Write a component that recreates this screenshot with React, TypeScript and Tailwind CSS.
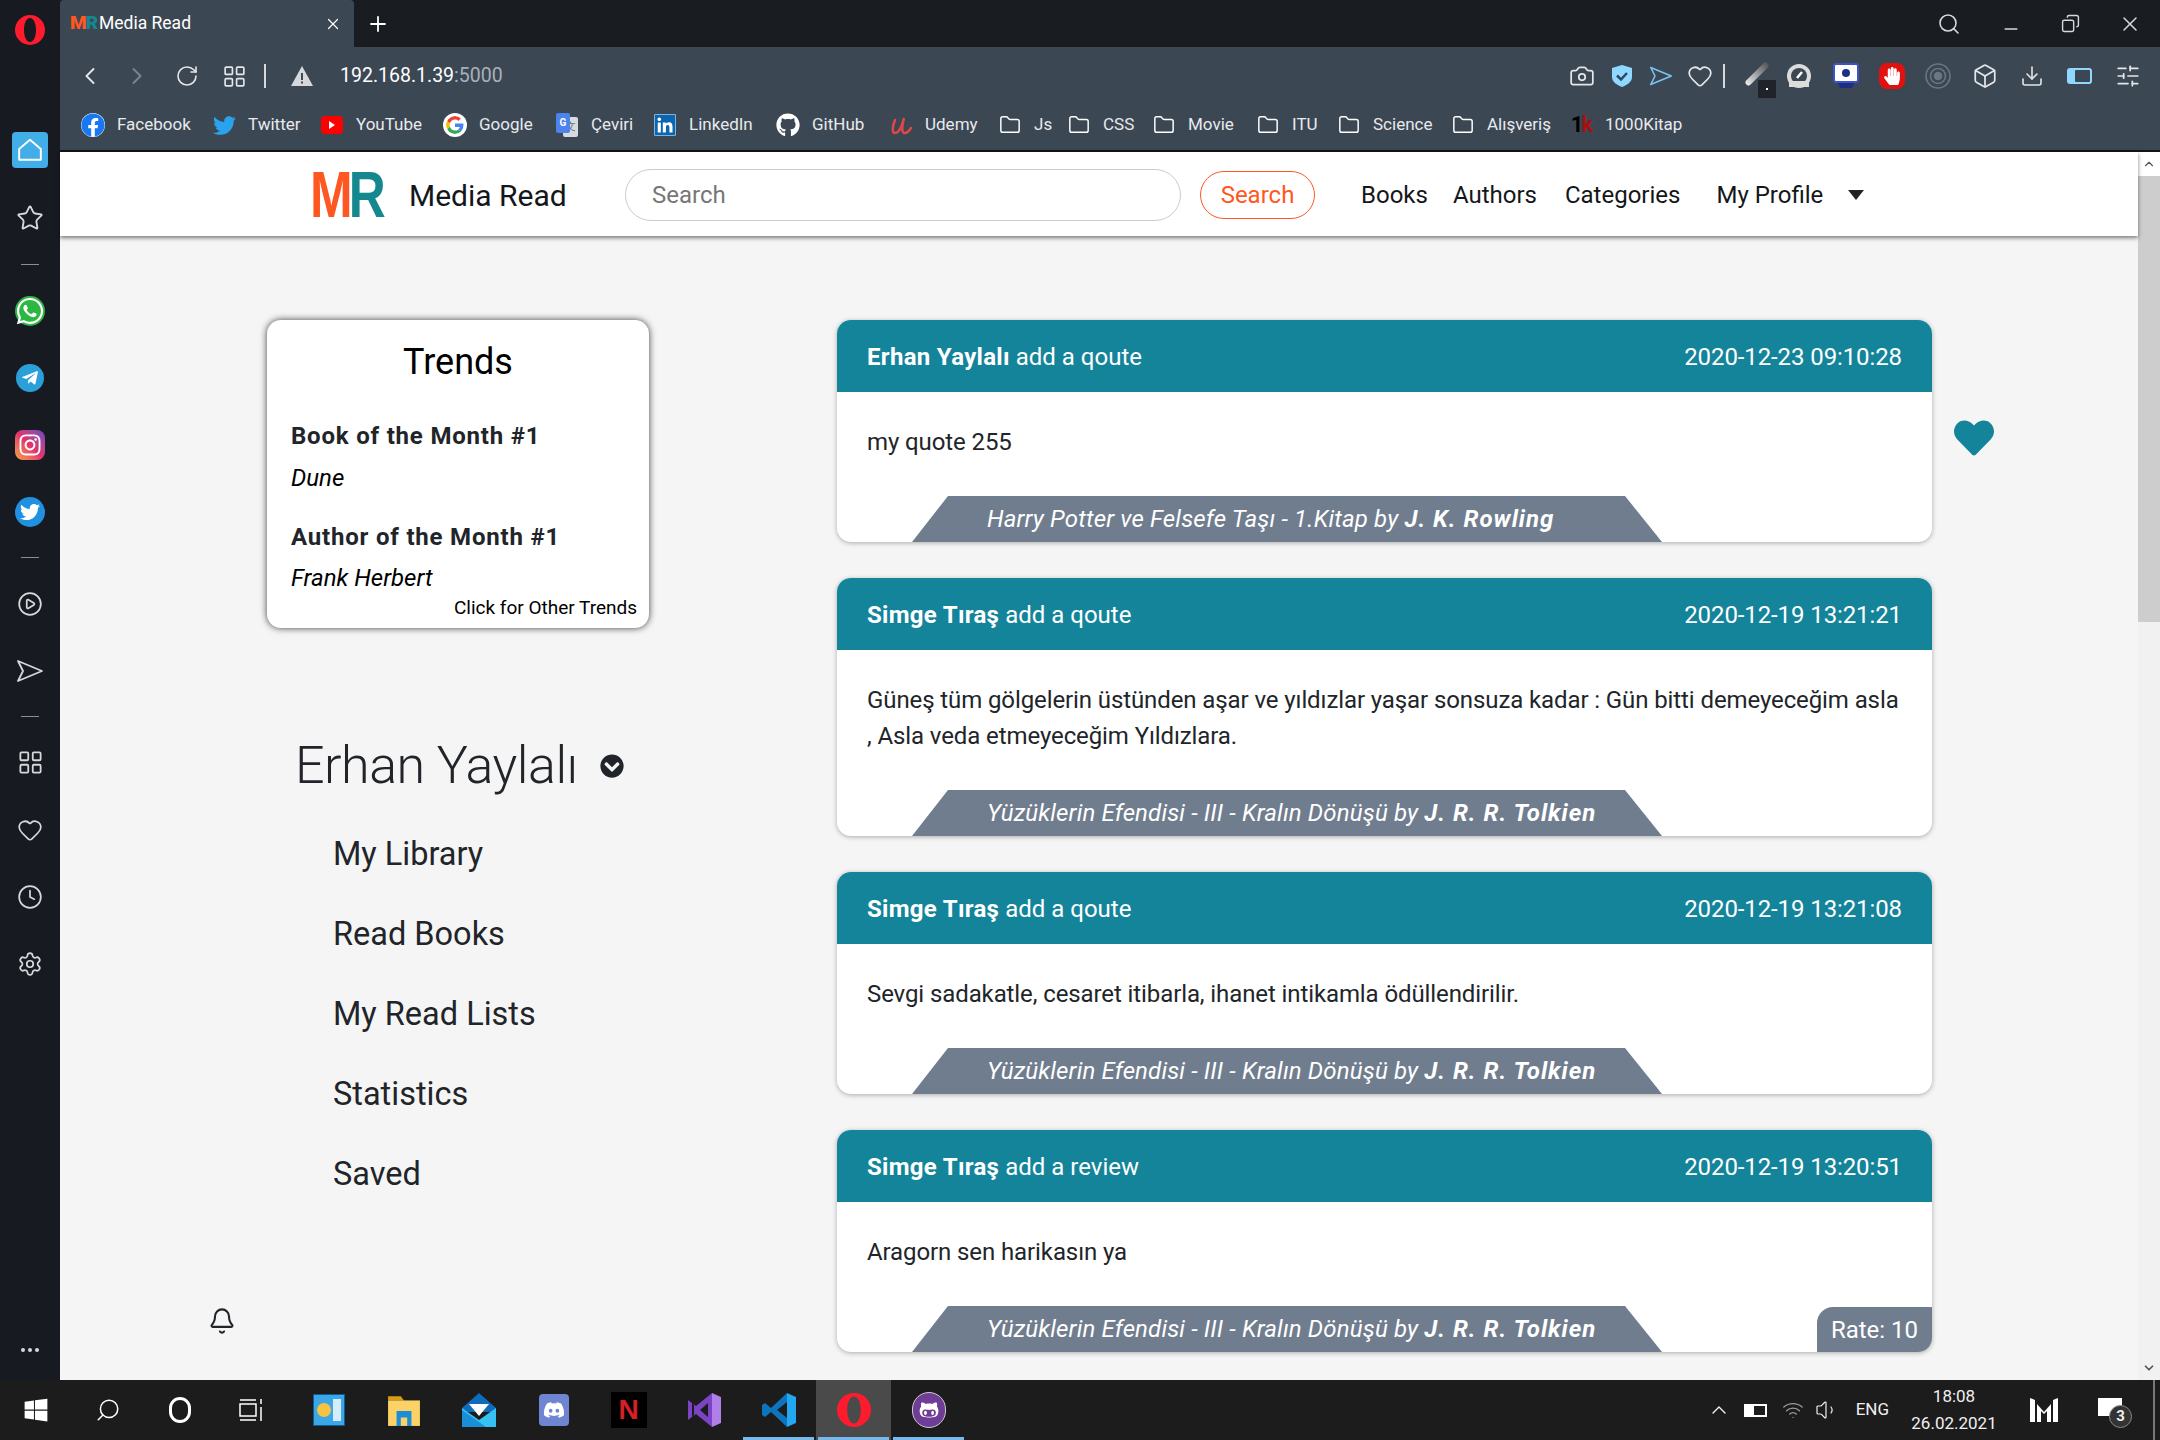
import React from "react";
import {
  Search, Minus, Copy, X, Plus, ChevronLeft, ChevronRight, RotateCw, LayoutGrid, Folder, Camera,
  Heart, Box, Download, SlidersHorizontal, Star, CirclePlay, Clock, Settings, Bell, ChevronUp,
  ChevronDown, Volume1, Wifi, MoreHorizontal,
} from "lucide-react";
import { FaFacebook, FaTwitter, FaLinkedin, FaGithub, FaWhatsapp, FaTelegramPlane, FaInstagram, FaWindows, FaDiscord, FaHeart, FaChevronCircleDown, FaGithubAlt, FaHandPaper } from "react-icons/fa";

const SendOutline = ({ className = "" }: { className?: string }) => (
  <svg viewBox="0 0 28 24" fill="none" stroke="currentColor" strokeWidth="1.8" strokeLinejoin="round" className={className}>
    <path d="M2 2 L26 12 L2 22 L7 12 Z" />
  </svg>
);

const OperaLogo = ({ className = "" }: { className?: string }) => (
  <svg viewBox="0 0 30 30" className={className}>
    <path fillRule="evenodd" fill="#ff1b2d" d="M15 0a15 15 0 1 0 0 30a15 15 0 1 0 0-30zM15 3c3.6 0 6 5.4 6 12s-2.4 12-6 12s-6-5.4-6-12s2.4-12 6-12z" />
  </svg>
);

const GoogleIcon = () => (
  <svg viewBox="0 0 48 48" className="w-[24px] h-[24px] bg-white rounded-full p-[3px]">
    <path fill="#EA4335" d="M24 9.5c3.5 0 6.700 1.300 9.100 3.500l6.800-6.800C35.800 2.400 30.300 0 24 0 14.600 0 6.500 5.400 2.600 13.200l7.900 6.200C12.400 13.700 17.700 9.500 24 9.500z" />
    <path fill="#4285F4" d="M46.500 24.500c0-1.600-.1-3.100-.4-4.500H24v9h12.700c-.5 2.900-2.200 5.400-4.700 7l7.300 5.700c4.300-4 7.200-9.900 7.200-17.200z" />
    <path fill="#FBBC05" d="M10.500 28.600c-.5-1.400-.8-3-.8-4.600s.3-3.200.8-4.600l-7.900-6.200C.9 16.500 0 20.100 0 24s.9 7.500 2.600 10.800l7.900-6.200z" />
    <path fill="#34A853" d="M24 48c6.500 0 11.900-2.100 15.900-5.800L32 36.500c-2.200 1.500-5 2.300-8 2.300-6.300 0-11.600-4.200-13.500-9.900l-7.900 6.200C6.500 42.600 14.600 48 24 48z" />
  </svg>
);

const TranslateIcon = () => (
  <span className="relative w-[22px] h-[24px] block">
    <span className="absolute right-0 bottom-0 w-[15px] h-[20px] bg-[#d7dbe0] rounded-[2px] text-[#67707a] text-[11px] leading-[20px] text-center">文</span>
    <span className="absolute left-0 top-0 w-[14px] h-[20px] bg-[#4c83ec] rounded-[2px] text-white text-[10px] font-bold leading-[20px] text-center">G</span>
  </span>
);

const bookmarks: { label: string; icon: React.ReactNode; width: string }[] = [
  { label: "Facebook", width: "w-[131px]", icon: <span className="w-[24px] h-[24px] rounded-full bg-white flex items-center justify-center"><FaFacebook className="w-[24px] h-[24px] text-[#1877f2]" /></span> },
  { label: "Twitter", width: "w-[108px]", icon: <FaTwitter className="w-[23px] h-[23px] text-[#2aa3ef]" /> },
  { label: "YouTube", width: "w-[123px]", icon: <span className="w-[22px] h-[18px] rounded-[4px] bg-[#f00] flex items-center justify-center"><span className="w-0 h-0 border-y-[4px] border-y-transparent border-l-[6px] border-l-white" /></span> },
  { label: "Google", width: "w-[112px]", icon: <GoogleIcon /> },
  { label: "Çeviri", width: "w-[98px]", icon: <TranslateIcon /> },
  { label: "LinkedIn", width: "w-[123px]", icon: <span className="w-[22px] h-[22px] bg-white rounded-[2px] flex items-center justify-center"><FaLinkedin className="w-[24px] h-[24px] text-[#0a66b0]" /></span> },
  { label: "GitHub", width: "w-[113px]", icon: <span className="w-[24px] h-[24px] rounded-full bg-[#3c4754] flex items-center justify-center"><FaGithub className="w-[24px] h-[24px] text-white" /></span> },
  { label: "Udemy", width: "w-[109px]", icon: <svg viewBox="0 0 24 24" fill="none" stroke="#e04848" strokeWidth="2.500" strokeLinecap="round" className="w-[24px] h-[24px]"><path d="M6 7 C3 14 3 20 6 20 C10 20 13 13 15 5 C13 12 12 20 16 20 C18 20 20 18 22 15" /></svg> },
  { label: "Js", width: "w-[69px]", icon: <Folder className="w-[22px] h-[22px] text-white" strokeWidth={1.6} /> },
  { label: "CSS", width: "w-[85px]", icon: <Folder className="w-[22px] h-[22px] text-white" strokeWidth={1.6} /> },
  { label: "Movie", width: "w-[104px]", icon: <Folder className="w-[22px] h-[22px] text-white" strokeWidth={1.6} /> },
  { label: "ITU", width: "w-[81px]", icon: <Folder className="w-[22px] h-[22px] text-white" strokeWidth={1.6} /> },
  { label: "Science", width: "w-[114px]", icon: <Folder className="w-[22px] h-[22px] text-white" strokeWidth={1.6} /> },
  { label: "Alışveriş", width: "w-[118px]", icon: <Folder className="w-[22px] h-[22px] text-white" strokeWidth={1.6} /> },
  { label: "1000Kitap", width: "w-[116px]", icon: <span className="text-[22px] leading-[24px] font-bold tracking-[-2px]"><span className="text-black">1</span><span className="text-[#a80f0f]">k</span></span> },
];

const Divider = () => (
  <div className="h-[25px] flex items-center justify-center">
    <div className="w-[18px] h-[1px] bg-[#8a8f96]" />
  </div>
);

const SideItem = ({ children }: { children: React.ReactNode }) => (
  <div className="h-[67px] flex items-center justify-center text-[#d6d8db]">{children}</div>
);

const Sidebar = () => (
  <div className="w-[60px] shrink-0 bg-[#171b21] flex flex-col">
    <div className="h-[116px] pt-[15px] flex justify-center"><OperaLogo className="w-[30px] h-[30px]" /></div>
    <div className="h-[68px] flex items-center justify-center">
      <div className="w-[36px] h-[36px] rounded-[4px] bg-[#41aee8] flex items-center justify-center">
        <svg viewBox="0 0 24 24" fill="none" stroke="#fff" strokeWidth="1.8" strokeLinejoin="round" className="w-[26px] h-[26px]"><path d="M12 2.500 L22 11 V21 H2 V11 Z" /></svg>
      </div>
    </div>
    <div className="h-[68px] flex items-center justify-center text-[#d6d8db]"><Star className="w-[28px] h-[28px]" strokeWidth={1.6} /></div>
    <Divider />
    <SideItem>
      <span className="w-[30px] h-[30px] rounded-full bg-[#2cb742] flex items-center justify-center"><FaWhatsapp className="w-[30px] h-[30px] text-white" /></span>
    </SideItem>
    <SideItem>
      <span className="w-[28px] h-[28px] rounded-full bg-[#2a9fd8] flex items-center justify-center"><FaTelegramPlane className="w-[18px] h-[18px] text-white" /></span>
    </SideItem>
    <SideItem>
      <span className="w-[30px] h-[30px] rounded-[8px] bg-gradient-to-tr from-[#f9a13a] via-[#e1306c] to-[#6a3ec9] flex items-center justify-center"><FaInstagram className="w-[24px] h-[24px] text-white" /></span>
    </SideItem>
    <SideItem>
      <span className="w-[30px] h-[30px] rounded-full bg-[#1f91e0] flex items-center justify-center"><FaTwitter className="w-[20px] h-[20px] text-white" /></span>
    </SideItem>
    <Divider />
    <SideItem><CirclePlay className="w-[26px] h-[26px]" strokeWidth={1.6} /></SideItem>
    <SideItem><SendOutline className="w-[28px] h-[26px]" /></SideItem>
    <Divider />
    <SideItem><LayoutGrid className="w-[27px] h-[27px]" strokeWidth={1.6} /></SideItem>
    <SideItem><Heart className="w-[26px] h-[26px]" strokeWidth={1.6} /></SideItem>
    <SideItem><Clock className="w-[26px] h-[26px]" strokeWidth={1.6} /></SideItem>
    <SideItem><Settings className="w-[26px] h-[26px]" strokeWidth={1.6} /></SideItem>
    <div className="mt-auto h-[60px] flex items-center justify-center text-[#d6d8db]"><MoreHorizontal className="w-[24px] h-[24px]" /></div>
  </div>
);

const TabStrip = () => (
  <div className="h-[47px] bg-[#191c20] flex items-stretch shrink-0">
    <div className="w-[294px] bg-[#3c4754] rounded-tl-[4px] rounded-tr-[4px] flex items-center pl-[10px] pr-[12px] text-white">
      <span className="font-black text-[19px] tracking-[-1px] w-[29px]"><span className="text-[#ff5722]">M</span><span className="text-[#14878f]">R</span></span>
      <span className="text-[17.500px]">Media Read</span>
      <X className="ml-auto w-[18px] h-[18px]" strokeWidth={1.6} />
    </div>
    <div className="w-[48px] flex items-center justify-center text-white"><Plus className="w-[24px] h-[24px]" strokeWidth={1.8} /></div>
    <div className="ml-auto flex items-center text-[#d6d8db]">
      <div className="w-[60px] pr-[6px] flex justify-center"><Search className="w-[24px] h-[24px]" strokeWidth={1.6} /></div>
      <div className="w-[58px] flex justify-center pt-[10px]"><Minus className="w-[20px] h-[20px]" strokeWidth={1.8} /></div>
      <div className="w-[60px] flex justify-center"><Copy className="w-[19px] h-[19px] -scale-x-100" strokeWidth={1.8} /></div>
      <div className="w-[60px] flex justify-center"><X className="w-[24px] h-[24px]" strokeWidth={1.5} /></div>
    </div>
  </div>
);

const Toolbar = () => (
  <div className="h-[58px] bg-[#3c4754] flex items-center shrink-0 text-[#e4e6e8] pl-[16px]">
    <ChevronLeft className="w-[28px] h-[28px]" strokeWidth={1.6} />
    <ChevronRight className="ml-[19px] w-[28px] h-[28px] text-[#7c8591]" strokeWidth={1.6} />
    <RotateCw className="ml-[24px] w-[24px] h-[24px]" strokeWidth={1.6} />
    <LayoutGrid className="ml-[23px] w-[25px] h-[25px]" strokeWidth={1.6} />
    <div className="ml-[17px] w-[2px] h-[24px] bg-[#d6d8db]" />
    <svg viewBox="0 0 24 24" className="ml-[24px] w-[24px] h-[24px]"><path fill="#d6d8db" d="M12 2 L23 22 H1 Z" /><path fill="#3c4754" d="M11 9h2v7h-2zM11 17.500h2v2h-2z" /></svg>
    <div className="ml-[26px] text-[19.500px]"><span className="text-white">192.168.1.39</span><span className="text-[#aab0b7]">:5000</span></div>
    <div className="ml-auto flex items-center pr-[19px]">
      <Camera className="w-[26px] h-[26px]" strokeWidth={1.6} />
      <svg viewBox="0 0 24 24" className="ml-[15px] w-[24px] h-[28px]"><path fill="#8fd8ff" d="M12 1 L22 4 V13 C22 18 17 21 12 23 C7 21 2 18 2 13 V4 Z" /><path fill="none" stroke="#2d4860" strokeWidth="2.500" d="M7 11.500 L11 15.500 L17 9" /></svg>
      <SendOutline className="ml-[15px] w-[24px] h-[24px] text-[#7cc4ee]" />
      <Heart className="ml-[14px] w-[26px] h-[26px]" strokeWidth={1.6} />
      <div className="ml-[10px] w-[2px] h-[24px] bg-[#d6d8db]" />
      <div className="ml-[14px] w-[34px] h-[34px] relative">
        <span className="absolute left-[3px] top-[12px] w-[30px] h-[6px] bg-gradient-to-r from-[#eee] to-[#555] rounded-full -rotate-45" />
        <span className="absolute right-[-3px] bottom-[-5px] w-[18px] h-[18px] bg-[#20242a] flex items-center justify-center"><span className="w-[2px] h-[2px] bg-white" /></span>
      </div>
      <svg viewBox="0 0 26 26" className="ml-[13px] w-[26px] h-[26px]"><circle cx="13" cy="13" r="12" fill="#dcdcdc" /><circle cx="13" cy="13" r="8" fill="#3c4754" /><rect x="3" y="18" width="20" height="6" fill="#dcdcdc" /><path stroke="#fff" strokeWidth="2.500" d="M11 15 L16 9" /></svg>
      <svg viewBox="0 0 26 26" className="ml-[21px] w-[26px] h-[26px]"><rect x="1" y="1" width="24" height="18" rx="2" fill="#fff" stroke="#3f51c9" strokeWidth="2" /><circle cx="13" cy="10" r="4" fill="#1c2f80" /><path fill="#1c2f80" d="M5 20h16l-2 5H7z" /></svg>
      <span className="ml-[20px] w-[26px] h-[26px] bg-[#e31010] rounded-[8px] flex items-center justify-center"><FaHandPaper className="w-[16px] h-[18px] text-white" /></span>
      <svg viewBox="0 0 26 26" fill="none" stroke="#6c7682" strokeWidth="1.600" className="ml-[20px] w-[26px] h-[26px]"><circle cx="13" cy="13" r="12" /><circle cx="13" cy="13" r="7.500" /><circle cx="13" cy="13" r="3.500" fill="#6c7682" /></svg>
      <Box className="ml-[21px] w-[26px] h-[26px]" strokeWidth={1.6} />
      <Download className="ml-[22px] w-[24px] h-[24px]" strokeWidth={1.6} />
      <span className="ml-[23px] w-[25px] h-[16px] rounded-[3px] bg-[#8fd8ff] flex justify-end p-[2px]"><span className="w-[15px] h-full bg-[#3c4754] rounded-[1px]" /></span>
      <SlidersHorizontal className="ml-[23px] w-[26px] h-[26px]" strokeWidth={1.6} />
    </div>
  </div>
);

const Bookmarks = () => (
  <div className="h-[47px] pb-[5px] bg-[#3c4754] border-b-2 border-[#111418] flex items-center shrink-0 pl-[21px] text-[#e8eaec] text-[17px]">
    {bookmarks.map(b => (
      <div key={b.label} className={`${b.width} shrink-0 flex items-center`}>
        <span className="w-[24px] h-[24px] flex items-center justify-center">{b.icon}</span>
        <span className="ml-[12px]">{b.label}</span>
      </div>
    ))}
  </div>
);

const Navbar = () => (
  <div className="h-[84px] pt-[2px] bg-white shadow-[0_2px_4px_rgba(0,0,0,0.5)] flex items-center pl-[250px] text-[24px] text-[#14171a] shrink-0 relative z-10">
    <div className="w-[99px] h-[60px] font-black text-[64px] leading-none tracking-[-5px] font-['Liberation_Sans',sans-serif] flex items-center origin-left scale-x-[0.8]">
      <span className="text-[#ff5722]">M</span><span className="text-[#14878f]">R</span>
    </div>
    <span className="text-[30px] w-[216px]">Media Read</span>
    <input readOnly placeholder="Search" className="w-[556px] h-[52px] border border-[#ccc] rounded-[26px] px-[26px] placeholder:text-[#777] text-[24px] outline-none" />
    <button className="ml-[19px] w-[115px] h-[48px] border border-[#ff5722] rounded-[24px] text-[#ff5722]">Search</button>
    <span className="ml-[46px]">Books</span>
    <span className="ml-[25px]">Authors</span>
    <span className="ml-[28px]">Categories</span>
    <span className="ml-[36px]">My Profile</span>
    <span className="ml-[25px] w-0 h-0 border-x-[8px] border-x-transparent border-t-[10px] border-t-[#212529]" />
  </div>
);

const Trends = () => (
  <div className="w-[382px] h-[308px] bg-white rounded-[14px] shadow-[0_0_7px_rgba(0,0,0,0.75)] pl-[24px] pr-[12px] flex flex-col text-black">
    <h2 className="text-[36px] leading-[48px] text-center pt-[18px] h-[83px] -ml-[12px]">Trends</h2>
    <div className="text-[24px] leading-[36px] font-bold tracking-[0.8px] text-[#212529] mt-[15px]">Book of the Month #1</div>
    <div className="text-[24px] leading-[36px] italic mt-[6px]">Dune</div>
    <div className="text-[24px] leading-[36px] font-bold tracking-[0.8px] text-[#212529] mt-[23px]">Author of the Month #1</div>
    <div className="text-[24px] leading-[36px] italic mt-[5px]">Frank Herbert</div>
    <div className="text-[19px] leading-[24px] text-right">Click for Other Trends</div>
  </div>
);

const menu = ["My Library", "Read Books", "My Read Lists", "Statistics", "Saved"];

const UserMenu = () => (
  <div className="mt-[96px] pl-[28px]">
    <div className="flex items-center h-[84px]">
      <span className="text-[52px] tracking-[-0.5px] font-light text-[#212529] whitespace-nowrap">Erhan Yaylalı</span>
      <FaChevronCircleDown className="ml-[22px] w-[24px] h-[24px] text-[#212529]" />
    </div>
    <div className="pl-[38px] mt-[6px] flex flex-col text-[32.500px] text-[#212529]">
      {menu.map(m => (
        <div key={m} className="h-[80px] flex items-center">{m}</div>
      ))}
    </div>
  </div>
);

type Post = {
  user: string;
  action: string;
  date: string;
  body: React.ReactNode;
  book: string;
  author: string;
  rate?: number;
  liked?: boolean;
};

const posts: Post[] = [
  { user: "Erhan Yaylalı", action: "add a qoute", date: "2020-12-23 09:10:28", body: "my quote 255", book: "Harry Potter ve Felsefe Taşı - 1.Kitap", author: "J. K. Rowling", liked: true },
  {
    user: "Simge Tıraş", action: "add a qoute", date: "2020-12-19 13:21:21",
    body: <>Güneş tüm gölgelerin üstünden aşar ve yıldızlar yaşar sonsuza kadar : Gün bitti demeyeceğim asla<br />, Asla veda etmeyeceğim Yıldızlara.</>,
    book: "Yüzüklerin Efendisi - III - Kralın Dönüşü", author: "J. R. R. Tolkien",
  },
  { user: "Simge Tıraş", action: "add a qoute", date: "2020-12-19 13:21:08", body: "Sevgi sadakatle, cesaret itibarla, ihanet intikamla ödüllendirilir.", book: "Yüzüklerin Efendisi - III - Kralın Dönüşü", author: "J. R. R. Tolkien" },
  { user: "Simge Tıraş", action: "add a review", date: "2020-12-19 13:20:51", body: "Aragorn sen harikasın ya", book: "Yüzüklerin Efendisi - III - Kralın Dönüşü", author: "J. R. R. Tolkien", rate: 10 },
];

const PostCard = ({ post }: { post: Post }) => (
  <div className="relative w-[1095px]">
    <div className="relative rounded-[14px] bg-white shadow-[0_1px_5px_rgba(0,0,0,0.3)] overflow-hidden">
      <div className="h-[72px] pt-[2px] bg-[#14849a] text-white text-[24px] flex items-center justify-between px-[30px]">
        <span><b className="font-bold tracking-[0.3px]">{post.user}</b> {post.action}</span>
        <span className="tracking-[-0.1px]">{post.date}</span>
      </div>
      <div className="pt-[32px] pb-[36px] px-[30px] text-[24px] leading-[36px] tracking-[-0.1px] whitespace-nowrap text-[#212529]">{post.body}</div>
      <div className="ml-[75px] w-[750px] h-[46px] bg-[#707d8e] [clip-path:polygon(36px_0,713px_0,750px_100%,0_100%)] flex items-center pl-[75px] text-white text-[24px] italic tracking-[0.15px]">
        <span>{post.book} by <b className="font-bold tracking-[1px]">{post.author}</b></span>
      </div>
      {post.rate && (
        <div className="absolute right-0 bottom-0 w-[115px] h-[45px] bg-[#707d8e] rounded-tl-[16px] text-white text-[24px] flex items-center justify-center">Rate: {post.rate}</div>
      )}
    </div>
    {post.liked && <FaHeart className="absolute left-[1116px] top-[98px] w-[42px] h-[40px] text-[#14849a]" />}
  </div>
);

const Scrollbar = () => (
  <div className="w-[22px] shrink-0 bg-[#f1f1f1] flex flex-col items-center text-[#555]">
    <div className="h-[24px] flex items-center justify-center bg-white w-full"><ChevronUp className="w-[14px] h-[14px]" /></div>
    <div className="w-full h-[446px] bg-[#cdcdcd]" />
    <div className="mt-auto h-[24px] flex items-center justify-center"><ChevronDown className="w-[14px] h-[14px]" strokeWidth={3} /></div>
  </div>
);

const TaskSlot = ({ children, active, open, wide }: { children: React.ReactNode; active?: boolean; open?: boolean; wide?: boolean }) => (
  <div className={`relative h-full flex items-center justify-center ${wide ? "w-[72px]" : "w-[75px]"} ${active ? "bg-[#4a4a4a]" : ""}`}>
    {children}
    {open && <div className="absolute left-[2px] right-[2px] bottom-0 h-[3px] bg-[#76b9ed]" />}
  </div>
);

const Taskbar = () => (
  <div className="h-[60px] bg-[#1c1c1c] flex items-center shrink-0 text-white relative">
    <TaskSlot wide><FaWindows className="w-[26px] h-[26px]" /></TaskSlot>
    <TaskSlot wide><Search className="w-[26px] h-[26px] -scale-x-100" strokeWidth={1.4} /></TaskSlot>
    <TaskSlot wide><span className="w-[22px] h-[26px] rounded-full border-[3px] border-white" /></TaskSlot>
    <TaskSlot wide>
      <svg viewBox="0 0 26 26" fill="none" stroke="#fff" strokeWidth="1.500" className="w-[26px] h-[26px]"><rect x="1" y="7" width="16" height="12" /><path d="M1 3h16M1 23h16M22 2v5M22 10v14" /></svg>
    </TaskSlot>
    <div className="w-[3px]" />
    <TaskSlot>
      <span className="w-[32px] h-[32px] bg-[#3ba7e6] border border-[#0c5d96] flex items-center justify-center gap-[2px] p-[3px]"><span className="w-[14px] h-[14px] rounded-full bg-[#f6c343]" /><span className="w-[8px] h-[22px] bg-[#d5ecfa]" /></span>
    </TaskSlot>
    <TaskSlot>
      <svg viewBox="0 0 32 32" className="w-[34px] h-[34px]"><path fill="#d99c10" d="M1 3h12l3 4H1z" /><path fill="#fcd267" d="M1 7h30v24H1z" /><path fill="#1a8fd8" d="M9 17h14v14h-4v-8h-6v8H9z" /></svg>
    </TaskSlot>
    <TaskSlot>
      <svg viewBox="0 0 36 36" className="w-[36px] h-[36px]"><path fill="#0f6cbd" d="M18 1 L35 16 V20 H1 V16 Z" /><path fill="#35c1f1" d="M1 16 L18 28 L35 16 V35 H1 Z" /><path fill="#1a8fd8" d="M1 18 L25 35 H1 Z" /><path fill="#fff" d="M8 12 H28 L18 24 Z" /></svg>
    </TaskSlot>
    <TaskSlot>
      <span className="relative w-[30px] h-[32px] rounded-[4px] bg-[#6f85d2] flex items-center justify-center"><FaDiscord className="w-[22px] h-[22px] text-white" /></span>
    </TaskSlot>
    <TaskSlot>
      <span className="w-[36px] h-[36px] bg-black flex items-center justify-center text-[#d81f26] font-bold text-[28px] leading-none font-['Liberation_Sans',sans-serif]">N</span>
    </TaskSlot>
    <TaskSlot>
      <svg viewBox="0 0 36 36" className="w-[36px] h-[36px]"><path fill="#b07fe8" d="M26 1 L35 5 V31 L26 35 Z" /><path fill="#7a44c4" d="M26 1 V35 L10 22 L2 28 V8 L10 14 Z M8 13 V23 L6 25 V11 Z M14 18 L22 25 V11 Z" fillRule="evenodd" /></svg>
    </TaskSlot>
    <TaskSlot open>
      <svg viewBox="0 0 36 36" className="w-[36px] h-[36px]"><path fill="#22a7f0" d="M26 1 L35 5 V31 L26 35 Z" /><path fill="#0c75bd" d="M26 1 L10 16 L4 11 L1 13 V23 L4 25 L10 20 L26 35 V26 L16 18 L26 10 Z" /></svg>
    </TaskSlot>
    <TaskSlot active open><OperaLogo className="w-[34px] h-[34px]" /></TaskSlot>
    <TaskSlot open>
      <span className="w-[34px] h-[36px] rounded-full bg-[#6f3c96] border border-[#ccc] flex items-center justify-center"><FaGithubAlt className="w-[20px] h-[20px] text-white" /></span>
    </TaskSlot>
    <div className="ml-auto h-full flex items-center text-[#f0f0f0] pr-[5px]">
      <ChevronUp className="w-[24px] h-[24px]" strokeWidth={1.4} />
      <span className="ml-[13px] w-[23px] h-[13px] border-2 border-white flex"><span className="w-[8px] bg-white" /></span>
      <Wifi className="ml-[15px] w-[22px] h-[22px] text-[#9a9a9a]" strokeWidth={1.5} />
      <Volume1 className="ml-[11px] w-[24px] h-[24px]" strokeWidth={1.2} />
      <span className="ml-[17px] text-[17px]">ENG</span>
      <div className="ml-[22px] w-[86px] flex flex-col items-center text-[17px] leading-[27px]"><span>18:08</span><span>26.02.2021</span></div>
      <svg viewBox="0 0 28 24" fill="#fff" className="ml-[33px] w-[28px] h-[24px]"><path d="M0 0 L5 2 V24 H0Z M7 6 L14 14 L21 6 V24 H17 V13 L14 16 L11 13 V24 H7Z M28 0 L23 2 V24 H28Z" /></svg>
      <div className="ml-[40px] relative w-[24px] h-[24px]">
        <span className="absolute left-0 top-0 w-[24px] h-[18px] bg-white" />
        <span className="absolute left-[11px] top-[7px] w-[23px] h-[23px] rounded-full bg-[#333] border border-[#888] flex items-center justify-center text-[15px] font-bold">3</span>
      </div>
      <div className="ml-[31px] w-[2px] h-full bg-[#777]" />
    </div>
  </div>
);

export default function App() {
  return (
    <div className="w-[2160px] h-[1440px] overflow-hidden flex flex-col font-['Roboto',sans-serif]">
      <div className="flex-1 min-h-0 flex">
        <Sidebar />
        <div className="flex-1 min-w-0 flex flex-col">
          <TabStrip />
          <Toolbar />
          <Bookmarks />
          <div className="flex-1 min-h-0 flex">
            <div className="flex-1 min-w-0 flex flex-col bg-[#f5f5f5] relative">
              <Navbar />
              <div className="flex-1 min-h-0 overflow-hidden flex pt-[84px] pl-[207px]">
                <div className="w-[382px] shrink-0">
                  <Trends />
                  <UserMenu />
                </div>
                <div className="ml-[188px] flex flex-col gap-[36px]">
                  {posts.map(p => <PostCard key={p.date} post={p} />)}
                </div>
              </div>
              <Bell className="absolute left-[148px] top-[1153px] w-[28px] h-[32px] text-[#212529]" strokeWidth={1.8} />
            </div>
            <Scrollbar />
          </div>
        </div>
      </div>
      <Taskbar />
    </div>
  );
}
